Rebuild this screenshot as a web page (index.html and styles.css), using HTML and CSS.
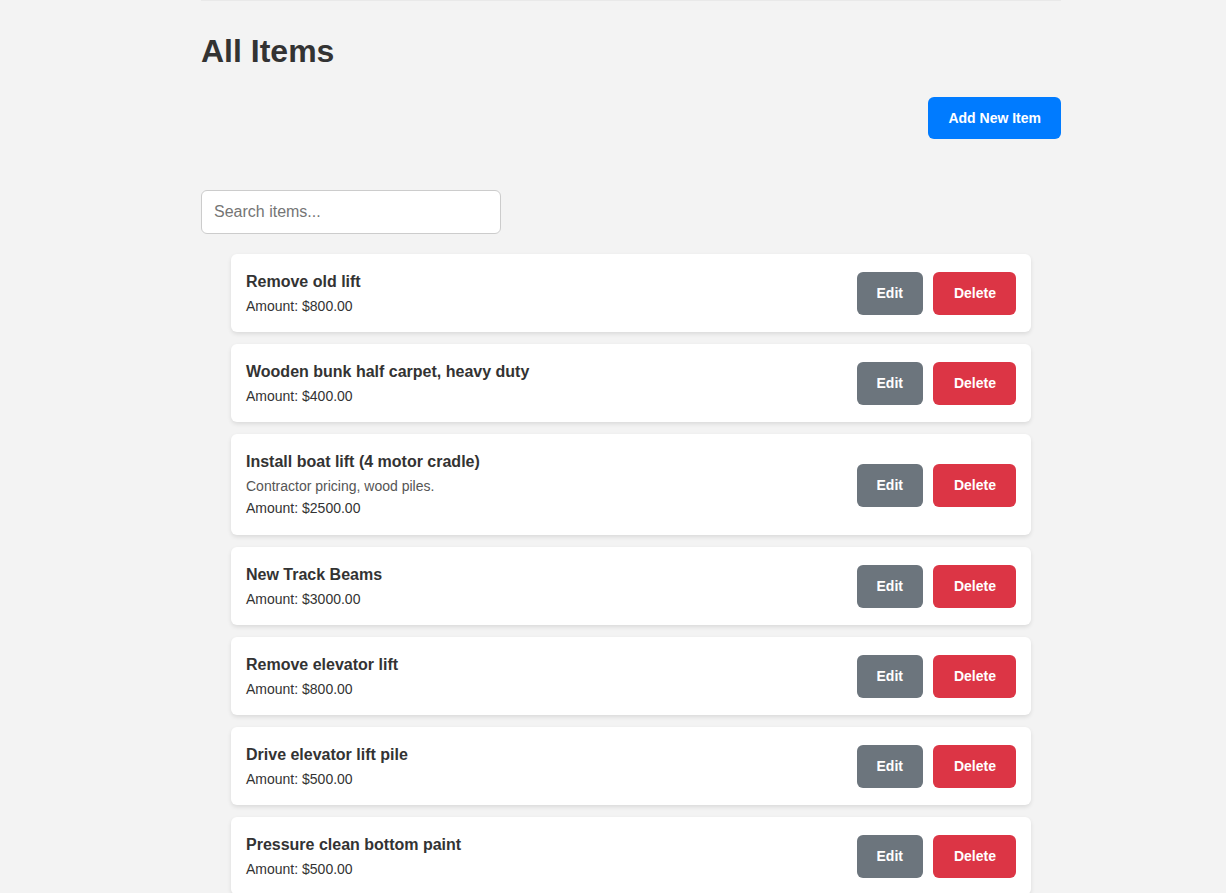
FILE: index.html
```html
<!DOCTYPE html>
<html lang="en">
<head>
<meta charset="utf-8">
<title>All Items</title>
<link rel="stylesheet" href="styles.css">
</head>
<body>
<div class="page">
  <div class="top-rule"></div>
  <h1 class="title">All Items</h1>
  <div class="toolbar">
    <button class="btn btn-primary">Add New Item</button>
  </div>
  <input class="search" type="text" placeholder="Search items...">
  <ul class="item-list">
    <li class="item">
      <div class="item-info">
        <h3 class="item-name">Remove old lift</h3>
        <p class="item-amount">Amount: $800.00</p>
      </div>
      <div class="item-actions">
        <button class="btn btn-edit">Edit</button>
        <button class="btn btn-delete">Delete</button>
      </div>
    </li>
    <li class="item">
      <div class="item-info">
        <h3 class="item-name">Wooden bunk half carpet, heavy duty</h3>
        <p class="item-amount">Amount: $400.00</p>
      </div>
      <div class="item-actions">
        <button class="btn btn-edit">Edit</button>
        <button class="btn btn-delete">Delete</button>
      </div>
    </li>
    <li class="item">
      <div class="item-info">
        <h3 class="item-name">Install boat lift (4 motor cradle)</h3>
        <p class="item-desc">Contractor pricing, wood piles.</p>
        <p class="item-amount">Amount: $2500.00</p>
      </div>
      <div class="item-actions">
        <button class="btn btn-edit">Edit</button>
        <button class="btn btn-delete">Delete</button>
      </div>
    </li>
    <li class="item">
      <div class="item-info">
        <h3 class="item-name">New Track Beams</h3>
        <p class="item-amount">Amount: $3000.00</p>
      </div>
      <div class="item-actions">
        <button class="btn btn-edit">Edit</button>
        <button class="btn btn-delete">Delete</button>
      </div>
    </li>
    <li class="item">
      <div class="item-info">
        <h3 class="item-name">Remove elevator lift</h3>
        <p class="item-amount">Amount: $800.00</p>
      </div>
      <div class="item-actions">
        <button class="btn btn-edit">Edit</button>
        <button class="btn btn-delete">Delete</button>
      </div>
    </li>
    <li class="item">
      <div class="item-info">
        <h3 class="item-name">Drive elevator lift pile</h3>
        <p class="item-amount">Amount: $500.00</p>
      </div>
      <div class="item-actions">
        <button class="btn btn-edit">Edit</button>
        <button class="btn btn-delete">Delete</button>
      </div>
    </li>
    <li class="item">
      <div class="item-info">
        <h3 class="item-name">Pressure clean bottom paint</h3>
        <p class="item-amount">Amount: $500.00</p>
      </div>
      <div class="item-actions">
        <button class="btn btn-edit">Edit</button>
        <button class="btn btn-delete">Delete</button>
      </div>
    </li>
  </ul>
</div>
</body>
</html>
```

FILE: styles.css
```css
* {
  box-sizing: border-box;
}

html, body {
  margin: 0;
  padding: 0;
  background: #f3f3f3;
}

body {
  font-family: "Liberation Sans", Arial, sans-serif;
  color: #333;
}

.page {
  width: 860px;
  margin-left: 201px;
  padding-bottom: 40px;
}

.top-rule {
  height: 1px;
  background: #e9e9e9;
}

.title {
  margin: 32px 0 0;
  font-size: 32px;
  line-height: 37px;
  font-weight: bold;
  color: #333;
}

.toolbar {
  display: flex;
  justify-content: flex-end;
  margin-top: 27px;
}

.btn {
  border: none;
  border-radius: 6px;
  font-family: "Liberation Sans", Arial, sans-serif;
  font-size: 14px;
  font-weight: bold;
  color: #fff;
  cursor: pointer;
}

.btn-primary {
  background: #007bff;
  padding: 0 20px;
  height: 42px;
  line-height: 42px;
}

.search {
  display: block;
  margin-top: 51px;
  width: 300px;
  height: 44px;
  padding: 0 12px;
  border: 1px solid #ccc;
  border-radius: 6px;
  background: #fff;
  font-family: "Liberation Sans", Arial, sans-serif;
  font-size: 16px;
  color: #333;
}

.search::placeholder {
  color: #757575;
}

.item-list {
  list-style: none;
  margin: 20px 30px 0;
  padding: 0;
  display: flex;
  flex-direction: column;
  gap: 12px;
}

.item {
  display: flex;
  align-items: center;
  justify-content: space-between;
  background: #fff;
  border-radius: 6px;
  box-shadow: 0 2px 4px rgba(0, 0, 0, 0.1);
  padding: 16px 15px 15px 15px;
}

.item-info {
  display: flex;
  flex-direction: column;
}

.item-name {
  margin: 0 0 1px;
  font-size: 16px;
  line-height: 24px;
  font-weight: bold;
  color: #333;
}

.item-desc {
  margin: 0;
  font-size: 14px;
  line-height: 22px;
  color: #555;
}

.item-amount {
  margin: 0;
  font-size: 14px;
  line-height: 22px;
  color: #333;
}

.item-desc + .item-amount {
  padding-bottom: 1px;
}

.item-actions {
  display: flex;
  gap: 10px;
}

.btn-edit,
.btn-delete {
  height: 43px;
  padding: 0 20px;
  line-height: 43px;
}

.btn-edit {
  background: #6c757d;
}

.btn-delete {
  background: #dc3545;
  padding: 0 20px 0 21px;
}
```
